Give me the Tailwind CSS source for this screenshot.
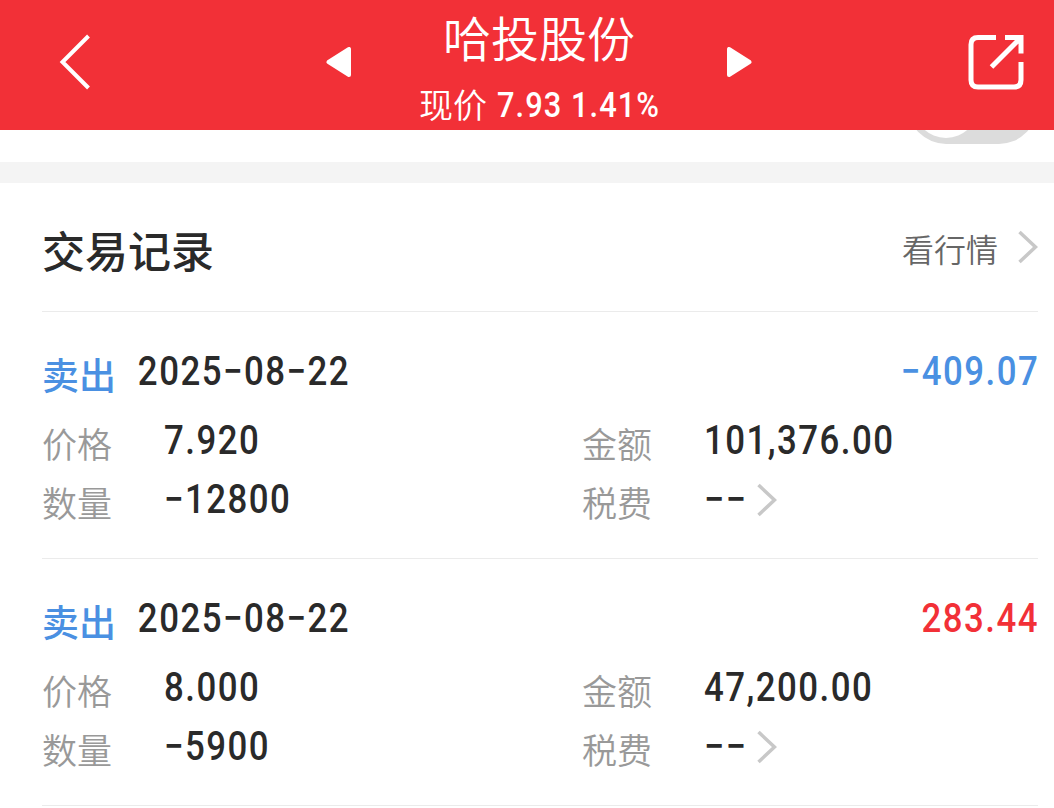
<!DOCTYPE html>
<html lang="zh-CN">
<head>
    <meta charset="UTF-8">
    <meta name="viewport" content="width=device-width, initial-scale=1.0">
    <title>哈投股份</title>
    <script src="https://cdn.jsdelivr.net/npm/@tailwindcss/browser@4"></script>
</head>
<body class="bg-white h-screen overflow-hidden text-[#2a2a2a] font-['Roboto','Noto_Sans_CJK_SC',sans-serif]">
    <header class="flex items-center h-[130px] pl-[59px] pr-[30px] bg-[#f23037] text-white">
        <svg class="w-8 h-[60px] -mt-2" viewBox="0 0 32 60" fill="none" stroke="currentColor" stroke-width="4">
            <path d="M29.5 5L3.5 31L29.5 57"/>
        </svg>
        <div class="flex items-center justify-between w-[426px] ml-[235px]">
            <svg class="w-[25px] h-[30px] -mt-1.5" viewBox="0 0 25 30" fill="currentColor" stroke="currentColor" stroke-width="4" stroke-linejoin="round">
                <path d="M23 2V28L2.5 15Z"/>
            </svg>
            <div class="flex flex-col items-center pt-1">
                <h1 class="text-[48px] leading-[66px] font-['Noto_Sans_CJK_SC'] font-[350]">哈投股份</h1>
                <div class="flex items-center h-[58px] mt-1 text-[34px]">
                    <span class="pt-0.5 font-['Noto_Sans_CJK_SC'] font-[350] mr-2.5">现价</span>
                    <span class="w-[63px] mr-[11px] pt-2 text-[35px] font-medium tracking-[1.2px] origin-left scale-x-[.88]">7.93</span>
                    <span class="w-[88px] pt-2 text-[35px] font-medium tracking-[1.2px] origin-left scale-x-[.88]">1.41%</span>
                </div>
            </div>
            <svg class="w-[25px] h-[30px] -mt-1.5" viewBox="0 0 25 30" fill="currentColor" stroke="currentColor" stroke-width="4" stroke-linejoin="round">
                <path d="M2 2V28L22.5 15Z"/>
            </svg>
        </div>
        <svg class="w-14 h-14 ml-auto -mt-[7px]" viewBox="0 0 56 56" fill="none" stroke="currentColor" stroke-width="5">
            <path d="M28 3.5H10Q3 3.5 3 10.5V46Q3 53 10 53H46Q53 53 53 46V28"/>
            <path d="M37 3.5H53V19.5M53 3.5L23.5 33"/>
        </svg>
    </header>

    <div class="flex justify-end items-start h-8 pr-[17px] overflow-hidden">
        <div class="flex items-center w-[129px] h-[76px] -mt-[62px] p-1.5 rounded-full bg-[#dcdcdc]">
            <div class="w-16 h-16 rounded-full bg-white"></div>
        </div>
    </div>
    <div class="h-[21px] bg-[#f4f4f4]"></div>

    <main class="pl-[42px] pr-4">
        <div class="flex items-center justify-between h-[129px] border-b border-[#ebebeb]">
            <h2 class="pt-3 text-[43px] leading-[60px] font-medium">交易记录</h2>
            <a class="flex items-center text-[32px] text-[#666]">
                <span class="pt-2 font-[350]">看行情</span>
                <svg class="w-5 h-9 ml-5" viewBox="0 0 20 36" fill="none" stroke="#c8c8c8" stroke-width="3.5">
                    <path d="M1.5 3L17.5 18L1.5 33"/>
                </svg>
            </a>
        </div>

        <section class="h-[247px] pt-[30px] border-b border-[#ebebeb]">
            <div class="flex items-center h-[59px] mb-2.5 text-[40px] tracking-[1.7px]">
                <span class="w-[95px] pt-3 text-[37px] tracking-normal font-medium text-[#4a90e2]">卖出</span>
                <span class="pl-px font-medium origin-left scale-x-[.87]">2025−08−22</span>
                <span class="ml-auto -mr-px font-medium text-[#4a90e2] origin-right scale-x-[.87]">−409.07</span>
            </div>
            <div class="grid grid-cols-[122px_418px_122px_1fr] auto-rows-[59px] items-center text-[40px] tracking-[1.7px] font-medium">
                <span class="pt-3.5 text-[35px] tracking-normal font-[350] text-[#999]">价格</span>
                <span class="origin-left scale-x-[.87]">7.920</span>
                <span class="pt-3.5 text-[35px] tracking-normal font-[350] text-[#999]">金额</span>
                <span class="origin-left scale-x-[.87]">101,376.00</span>
                <span class="pt-3.5 text-[35px] tracking-normal font-[350] text-[#999]">数量</span>
                <span class="origin-left scale-x-[.87]">−12800</span>
                <span class="pt-3.5 text-[35px] tracking-normal font-[350] text-[#999]">税费</span>
                <span class="flex items-center">
                    <span class="w-[53px] origin-left scale-x-[.9]">−−</span>
                    <svg class="w-5 h-9" viewBox="0 0 20 36" fill="none" stroke="#c8c8c8" stroke-width="3.5">
                        <path d="M1.5 3L17.5 18L1.5 33"/>
                    </svg>
                </span>
            </div>
        </section>

        <section class="h-[247px] pt-[30px] border-b border-[#ebebeb]">
            <div class="flex items-center h-[59px] mb-2.5 text-[40px] tracking-[1.7px]">
                <span class="w-[95px] pt-3 text-[37px] tracking-normal font-medium text-[#4a90e2]">卖出</span>
                <span class="pl-px font-medium origin-left scale-x-[.87]">2025−08−22</span>
                <span class="ml-auto -mr-px font-medium text-[#f23037] origin-right scale-x-[.87]">283.44</span>
            </div>
            <div class="grid grid-cols-[122px_418px_122px_1fr] auto-rows-[59px] items-center text-[40px] tracking-[1.7px] font-medium">
                <span class="pt-3.5 text-[35px] tracking-normal font-[350] text-[#999]">价格</span>
                <span class="origin-left scale-x-[.87]">8.000</span>
                <span class="pt-3.5 text-[35px] tracking-normal font-[350] text-[#999]">金额</span>
                <span class="origin-left scale-x-[.87]">47,200.00</span>
                <span class="pt-3.5 text-[35px] tracking-normal font-[350] text-[#999]">数量</span>
                <span class="origin-left scale-x-[.87]">−5900</span>
                <span class="pt-3.5 text-[35px] tracking-normal font-[350] text-[#999]">税费</span>
                <span class="flex items-center">
                    <span class="w-[53px] origin-left scale-x-[.9]">−−</span>
                    <svg class="w-5 h-9" viewBox="0 0 20 36" fill="none" stroke="#c8c8c8" stroke-width="3.5">
                        <path d="M1.5 3L17.5 18L1.5 33"/>
                    </svg>
                </span>
            </div>
        </section>
    </main>
</body>
</html>
